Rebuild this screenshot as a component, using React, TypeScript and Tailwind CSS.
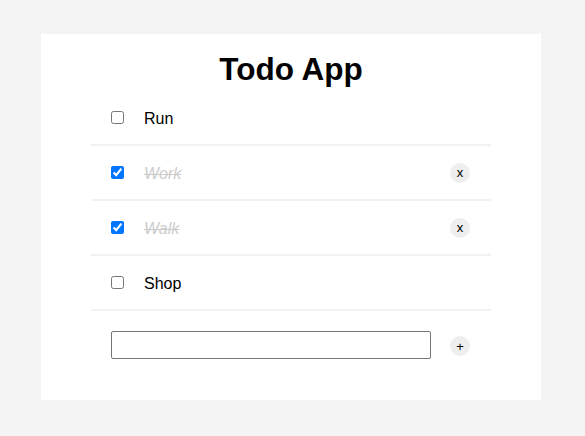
import { useState } from 'react';

type Todo = { id: number; text: string; done: boolean };

const initial: Todo[] = [
  { id: 1, text: 'Run', done: false },
  { id: 2, text: 'Work', done: true },
  { id: 3, text: 'Walk', done: true },
  { id: 4, text: 'Shop', done: false },
];

export default function App() {
  const [todos, setTodos] = useState<Todo[]>(initial);
  const [draft, setDraft] = useState('');

  const toggle = (id: number) =>
    setTodos(todos.map((t) => (t.id === id ? { ...t, done: !t.done } : t)));
  const remove = (id: number) => setTodos(todos.filter((t) => t.id !== id));
  const add = () => {
    if (!draft.trim()) return;
    setTodos([...todos, { id: Date.now(), text: draft.trim(), done: false }]);
    setDraft('');
  };

  return (
    <div className="min-h-screen bg-[#f4f4f4] pt-[34px] pl-[41px] font-['Liberation_Sans',Arial,sans-serif] text-black">
      <div className="w-[500px] h-[366px] bg-white px-[50px]">
        <h1 className="pt-[20px] h-[57px] text-center text-[31.5px] leading-none font-bold">Todo App</h1>

        <ul>
          {todos.map((t) => (
            <li
              key={t.id}
              className="flex items-center h-[55px] border-b-2 border-[#f2f2f2] pl-[20px] pr-[21px]"
            >
              <input
                type="checkbox"
                checked={t.done}
                onChange={() => toggle(t.id)}
                className="m-0 w-[13px] h-[13px]"
              />
              <span
                className={
                  t.done
                    ? 'ml-[20px] pt-[2px] text-base italic line-through text-[#cccccc]'
                    : 'ml-[20px] pt-[2px] text-base'
                }
              >
                {t.text}
              </span>
              {t.done && (
                <button
                  onClick={() => remove(t.id)}
                  className="ml-auto w-5 h-5 rounded-full bg-[#eeeeee] text-[13px] leading-none flex items-center justify-center pb-[1px]"
                >
                  x
                </button>
              )}
            </li>
          ))}
        </ul>

        <div className="flex items-center pt-[20px] pl-[20px] pr-[21px]">
          <input
            value={draft}
            onChange={(e) => setDraft(e.target.value)}
            className="w-[320px] h-[28px] border border-[#767676] rounded-[2px] px-1 text-sm outline-none"
          />
          <button
            onClick={add}
            className="ml-auto mt-[2px] w-5 h-5 rounded-full bg-[#eeeeee] text-[13px] leading-none flex items-center justify-center"
          >
            +
          </button>
        </div>
      </div>
    </div>
  );
}
